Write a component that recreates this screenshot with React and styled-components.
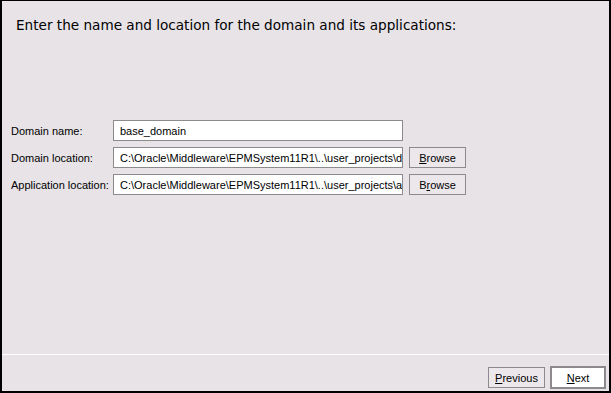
import styled, { createGlobalStyle } from "styled-components";

const GlobalStyle = createGlobalStyle`
  html, body {
    margin: 0;
    padding: 0;
    background: #e7e3e7;
  }
  * {
    box-sizing: border-box;
  }
`;

const Window = styled.div`
  width: 611px;
  height: 393px;
  display: flex;
  flex-direction: column;
  background: #e7e3e7;
  border-top: 1px solid #000;
  border-left: 2px solid #000;
  border-right: 2px solid #000;
  border-bottom: 2px solid #000;
  font-family: "Liberation Sans", Arial, sans-serif;
  color: #000;
`;

const Title = styled.h1`
  margin: 0;
  padding: 16px 0 0 14px;
  height: 119px;
  font-family: "DejaVu Sans", sans-serif;
  font-size: 13.6px;
  font-weight: normal;
  letter-spacing: 0;
`;

const Form = styled.div`
  display: flex;
  flex-direction: column;
  gap: 6px;
  padding-left: 9px;
  flex: 1;
`;

const Row = styled.div`
  display: flex;
  align-items: center;
  height: 21px;
`;

const Label = styled.label`
  width: 102px;
  font-size: 11px;
`;

const Field = styled.input`
  width: 290px;
  height: 21px;
  margin: 0;
  padding: 0 0 0 6px;
  background: #fff;
  border: 1px solid #8c8a8c;
  border-radius: 0;
  outline: none;
  font-family: "Liberation Sans", Arial, sans-serif;
  font-size: 11px;
  color: #000;
`;

const Button = styled.button`
  height: ${(p) => (p.$default ? "23px" : "21px")};
  width: ${(p) => p.$width}px;
  margin-left: ${(p) => p.$gap}px;
  margin-top: ${(p) => p.$top || 0}px;
  padding: 0;
  font-family: "Liberation Sans", Arial, sans-serif;
  font-size: 11px;
  color: #000;
  background: ${(p) => (p.$default ? "#fff" : "#ebe7eb")};
  border: ${(p) => (p.$default ? "2px solid #8c8a8c" : "1px solid #8c8a8c")};
  border-radius: 0;
  u {
    text-decoration: underline;
  }
`;

const Separator = styled.div`
  height: 1px;
  background: #fff;
`;

const Footer = styled.div`
  height: 36px;
  display: flex;
  justify-content: flex-end;
  align-items: flex-start;
  padding: 11px 3px 0 0;
`;

export default function App() {
  return (
    <>
      <GlobalStyle />
      <Window>
        <Title>Enter the name and location for the domain and its applications:</Title>
        <Form>
          <Row>
            <Label>Domain name:</Label>
            <Field readOnly defaultValue="base_domain" />
          </Row>
          <Row>
            <Label>Domain location:</Label>
            <Field
              readOnly
              defaultValue="C:\Oracle\Middleware\EPMSystem11R1\..\user_projects\domains\base_domain"
            />
            <Button $width={57} $gap={6}>
              <u>B</u>rowse
            </Button>
          </Row>
          <Row>
            <Label>Application location:</Label>
            <Field
              readOnly
              defaultValue="C:\Oracle\Middleware\EPMSystem11R1\..\user_projects\applications\base_domain"
            />
            <Button $width={57} $gap={6}>
              B<u>r</u>owse
            </Button>
          </Row>
        </Form>
        <Separator />
        <Footer>
          <Button $width={57} $gap={0} $top={1}>
            <u>P</u>revious
          </Button>
          <Button $width={56} $gap={5} $default>
            <u>N</u>ext
          </Button>
        </Footer>
      </Window>
    </>
  );
}
